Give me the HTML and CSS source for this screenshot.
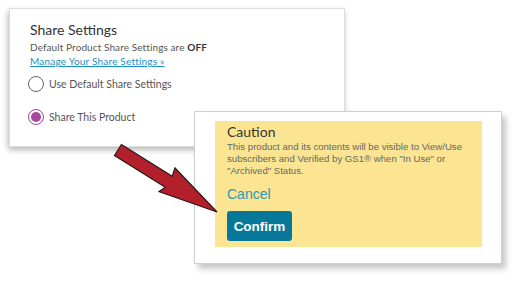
FILE: index.html
```html
<!DOCTYPE html>
<html>
<head>
	<title>Share Settings</title>
	<meta name="viewport" content="width=device-width,initial-scale=1">
	<link rel="stylesheet" href="styles.css">
</head>
<body>

	<div class="settings">
		<h2>Share Settings</h2>
		<p class="note">Default Product Share Settings are <b>OFF</b></p>
		<p class="links"><a class="manage" href="#">Manage Your Share Settings &raquo;</a></p>
		<div class="options">
			<label class="option"><span class="radio"></span>Use Default Share Settings</label>
			<label class="option checked"><span class="radio"></span>Share This Product</label>
		</div>
	</div>

	<div class="popup">
		<div class="caution">
			<h3>Caution</h3>
			<p>This product and its contents will be visible to View/Use subscribers and Verified by GS1&reg; when "In Use" or "Archived" Status.</p>
			<a class="cancel" href="#">Cancel</a>
			<button class="btn">Confirm</button>
		</div>
	</div>

	<svg class="arrow" width="520" height="282" viewBox="0 0 520 282">
		<polygon points="121.4,144.5 172.2,176.3 175,168 217,212 159,191.5 165.3,187.3 114.5,155.5"
			fill="#b3202c" stroke="#2a1a1a" stroke-width="1.2" stroke-linejoin="miter"/>
	</svg>

</body>
</html>
```

FILE: styles.css
```css
*{
	box-sizing: border-box;
	padding: 0;
	margin: 0;
}

body{
	width: 520px;
	height: 282px;
	background: #fff;
	position: relative;
	overflow: hidden;
	font-family: "Lato", "Open Sans", sans-serif;
}

.settings{
	margin: 8px 0 0 9px;
	width: 336px;
	height: 139px;
	border: 1px solid #ddd;
	box-shadow: -1px 3px 6px rgba(0,0,0,.28);
	padding: 12px 20px;
	background: #fff;
}
.settings h2{
	font-size: 14px;
	font-weight: 400;
	color: #333;
	line-height: 18px;
}
.settings .note{
	font-size: 10px;
	line-height: 13px;
	color: #555;
	margin-top: 2px;
	letter-spacing: .1px;
}
.settings .note b{
	color: #333;
}
.links{
	font-size: 10px;
	line-height: 13px;
	margin-top: 1px;
}
.manage{
	color: #1b8fc4;
	letter-spacing: .2px;
}

.options{
	display: flex;
	flex-direction: column;
	gap: 17px;
	margin-top: 8px;
}
.option{
	display: flex;
	align-items: center;
	gap: 5px;
	font-size: 10.5px;
	color: #555;
	margin-left: -2px;
}
.radio{
	width: 16px;
	height: 16px;
	border-radius: 50%;
	border: 1.5px solid #666;
	display: flex;
	align-items: center;
	justify-content: center;
}
.option.checked .radio{
	border-color: #a5479e;
}
.option.checked .radio::after{
	content: "";
	width: 10px;
	height: 10px;
	border-radius: 50%;
	background: #a5479e;
}

.popup{
	position: absolute;
	left: 194px;
	top: 111px;
	width: 308px;
	height: 153px;
	background: #fff;
	border: 1px solid #cfcfcf;
	box-shadow: 4px 5px 6px rgba(0,0,0,.22);
	padding: 9px 19px 0 20px;
}
.caution{
	background: #fbe592;
	height: 126px;
	padding: 2px 12px;
	display: flex;
	flex-direction: column;
	align-items: flex-start;
}
.caution h3{
	font-size: 14px;
	font-weight: 400;
	color: #333;
	line-height: 18px;
}
.caution p{
	font-family: "Liberation Sans", Arial, sans-serif;
	font-size: 9.6px;
	line-height: 12px;
	color: #666;
}
.cancel{
	font-family: "Liberation Sans", Arial, sans-serif;
	font-size: 14px;
	color: #2a98b5;
	text-decoration: none;
	margin-top: 9px;
	line-height: 16px;
}
.btn{
	margin-top: 9px;
	width: 65px;
	height: 30px;
	background: #08789a;
	color: #fff;
	border: none;
	border-radius: 3px;
	font-family: "Liberation Sans", Arial, sans-serif;
	font-size: 13.5px;
	font-weight: bold;
}

.arrow{
	position: absolute;
	left: 0;
	top: 0;
	pointer-events: none;
}
```
